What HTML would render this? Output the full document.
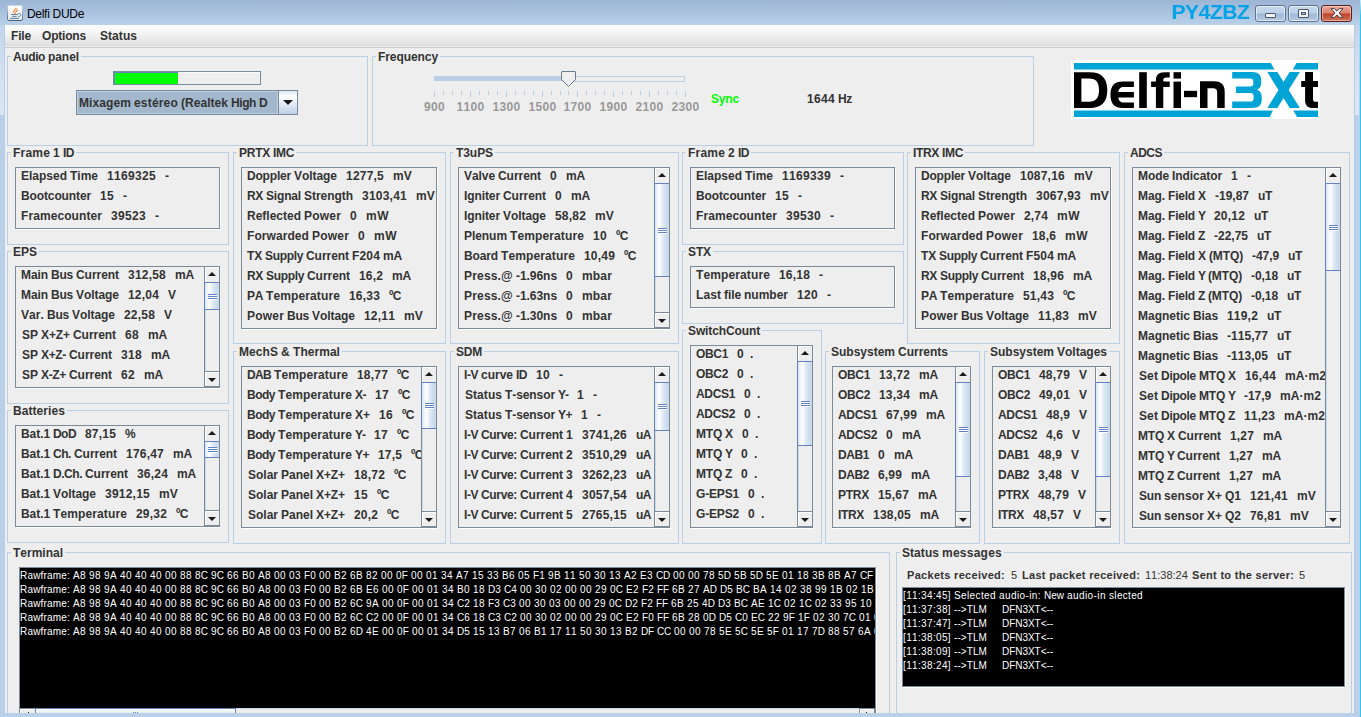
<!DOCTYPE html><html><head><meta charset="utf-8"><title>Delfi DUDe</title><style>
html,body{margin:0;padding:0;}
body{width:1361px;height:717px;overflow:hidden;position:relative;background:#eeeeee;
 font-family:"Liberation Sans",sans-serif;font-size:12px;font-weight:bold;color:#333333;font-kerning:none;font-variant-ligatures:none;}
div,span{box-sizing:border-box;}
.a{position:absolute;}
.tb{position:absolute;border:1px solid #b8cfe5;}
.tt{position:absolute;background:#eeeeee;white-space:pre;line-height:14px;height:14px;}
.box{position:absolute;border:1px solid #7a8a99;overflow:hidden;}
.boxhl{position:absolute;background:#ffffff;}
.r{position:absolute;white-space:pre;line-height:20px;height:20px;left:0;}
.sb{position:absolute;background:#eeeeee;border-left:1px solid #7a8a99;}
.sbtn{position:absolute;left:0;width:14px;background:#eeeeee;box-shadow:inset 1px 1px 0 #ffffff;}
.thumb{position:absolute;left:-1px;width:15px;border:1px solid #6382bf;border-right:0;
 background:linear-gradient(90deg,#d9e6f4 0%,#ffffff 30%,#dbe7f4 60%,#c2d6eb 100%);}
.grip{position:absolute;left:3px;width:9px;height:6px;
 background:repeating-linear-gradient(#6382bf 0px,#6382bf 1px,#ffffff 1px,#ffffff 2px);}
i{position:absolute;top:0;font-style:normal;white-space:pre;}
.tri{position:absolute;width:0;height:0;border-left:4px solid transparent;border-right:4px solid transparent;}
.term{position:absolute;background:#000;color:#fff;font-weight:normal;font-size:10px;overflow:hidden;}
.tr{position:absolute;white-space:pre;line-height:12px;height:12px;}
</style></head><body>
<div class="a" style="left:0;top:0;width:1361px;height:25px;background:linear-gradient(#9cb5d4 0%,#aac2de 50%,#b9d0ea 100%);"></div>
<div class="a" style="left:0;top:25px;width:5px;height:692px;background:#bad0e9;"></div>
<div class="a" style="left:1354px;top:25px;width:7px;height:692px;background:#bad0e9;"></div>
<div class="a" style="left:0;top:713px;width:1361px;height:4px;background:#bad0e9;"></div>
<div class="a" style="left:5px;top:25px;width:1349px;height:21px;background:linear-gradient(#ffffff 0%,#fbfbfb 15%,#efefef 55%,#dddddd 100%);"></div>
<div class="a" style="left:5px;top:46px;width:1349px;height:1px;background:#ececec;"></div>
<div class="a" style="left:5px;top:47px;width:1349px;height:1px;background:#cccccc;"></div>
<svg class="a" style="left:6px;top:4px" width="18" height="18" viewBox="6 4 18 18">
<defs><linearGradient id="jg" x1="0" y1="0" x2="0" y2="1"><stop offset="0" stop-color="#ffffff"/><stop offset="1" stop-color="#e6e6e6"/></linearGradient>
<linearGradient id="jb" x1="0" y1="0" x2="0" y2="1"><stop offset="0" stop-color="#c9d6e4"/><stop offset="0.5" stop-color="#8da3bb"/><stop offset="1" stop-color="#45627f"/></linearGradient></defs>
<rect x="7.5" y="5.5" width="15" height="15" rx="1.6" fill="url(#jg)" stroke="url(#jb)" stroke-width="1"/>
<path d="M13.2 12.4 L16.4 7.8 M14.5 13.6 L17.7 9.6" stroke="#e8761a" stroke-width="1.3" stroke-dasharray="1.6 0.5" fill="none"/>
<path d="M11.1 14.5 H18 M12.1 16.4 H16.7 M10 18.4 H18.8" stroke="#4d7498" stroke-width="0.9" fill="none"/>
<path d="M18.3 13.5 C21.4 13.2 21.4 16.4 18.2 16.8" stroke="#4d7498" stroke-width="0.9" fill="none"/>
</svg>
<div class="a" style="left:27px;top:5px;line-height:18px;font-weight:normal;color:#000;letter-spacing:-0.3px;white-space:pre;">Delfi DUDe</div>
<div class="a" id="py" style="left:1171.3px;top:0px;line-height:24px;font-size:21px;letter-spacing:-0.44px;color:#00a2e8;white-space:pre;">PY4ZBZ</div>
<div class="a" style="left:1255px;top:5px;width:31px;height:17px;border:1px solid #5f708c;border-radius:3px;background:linear-gradient(#c6d8ec 0%,#bdd1e8 48%,#9fb9d6 52%,#b4cae3 100%);box-shadow:inset 0 0 0 1px rgba(255,255,255,0.6);"></div>
<div class="a" style="left:1288px;top:5px;width:31px;height:17px;border:1px solid #5f708c;border-radius:3px;background:linear-gradient(#c6d8ec 0%,#bdd1e8 48%,#9fb9d6 52%,#b4cae3 100%);box-shadow:inset 0 0 0 1px rgba(255,255,255,0.6);"></div>
<div class="a" style="left:1321px;top:5px;width:31px;height:17px;border:1px solid #5b1c25;border-radius:3px;background:linear-gradient(#e9a99b 0%,#d9806c 48%,#bd4428 52%,#cf745c 100%);box-shadow:inset 0 0 0 1px rgba(255,220,210,0.55);"></div>
<div class="a" style="left:1265px;top:13px;width:11px;height:5px;border:1px solid #4b5468;border-radius:1px;background:#f4f4f4;"></div>
<div class="a" style="left:1298px;top:9px;width:11px;height:9px;border:1px solid #4b5468;border-radius:1px;background:#f4f4f4;"></div>
<div class="a" style="left:1301px;top:12px;width:5px;height:3px;border:1px solid #4b5468;background:#a9c0dc;"></div>
<svg class="a" style="left:1329.5px;top:8.3px" width="14" height="10" viewBox="0 0 14 10">
<path d="M1 0.6 L4.5 0.6 L7 3.1 L9.5 0.6 L13 0.6 L9.1 5 L13 9.4 L9.5 9.4 L7 6.9 L4.5 9.4 L1 9.4 L4.9 5 Z" fill="#f2f2f2" stroke="#43303a" stroke-width="0.9" stroke-linejoin="round"/>
</svg>
<div class="a" style="left:11px;top:26px;line-height:20px;height:20px;"><i style="left:0px;letter-spacing:-0.168px">File</i></div>
<div class="a" style="left:42px;top:26px;line-height:20px;height:20px;"><i style="left:0px;letter-spacing:-0.190px">Options</i></div>
<div class="a" style="left:100px;top:26px;line-height:20px;height:20px;"><i style="left:0px;letter-spacing:0.054px">Status</i></div>
<div class="tb" style="left:7px;top:56px;width:361px;height:90px;"></div>
<div class="tt" style="left:11px;top:50px;width:70px;"><div class="a" style="left:2px;top:0"><i style="left:0px;letter-spacing:-0.398px">Audio</i><i style="left:35px;letter-spacing:-0.068px">panel</i></div></div>
<div class="tb" style="left:372px;top:56px;width:662px;height:90px;"></div>
<div class="tt" style="left:376px;top:50px;width:64px;"><div class="a" style="left:2px;top:0"><i style="left:0px;letter-spacing:-0.076px">Frequency</i></div></div>
<div class="a" style="left:113px;top:71px;width:148px;height:14px;border:1px solid #7a8a99;background:#eeeeee;"></div>
<div class="a" style="left:114px;top:72px;width:64px;height:12px;background:#6382bf;"></div>
<div class="a" style="left:115px;top:73px;width:63px;height:11px;background:#00ff00;"></div>
<div class="a" style="left:178px;top:72px;width:82px;height:1px;background:#f8fbfe;"></div>
<div class="a" style="left:178px;top:72px;width:1px;height:12px;background:#ffffff;"></div>
<div class="a" style="left:76px;top:90px;width:222px;height:25px;border:1px solid #7a8a99;background:#a3b8cc;"></div>
<div class="a" style="left:77px;top:91px;width:201px;height:23px;border:1px solid #b8cfe5;"></div>
<div class="a" style="left:79px;top:93px;width:198px;height:20px;line-height:21px;overflow:hidden;" id="combo"><i style="left:0px;letter-spacing:0.093px">Mixagem</i><i style="left:55px;letter-spacing:0.187px">estéreo</i><i style="left:102px;letter-spacing:0.039px">(Realtek</i><i style="left:152px;letter-spacing:-0.415px">High</i><i style="left:180px;letter-spacing:-0.666px">D</i></div>
<div class="a" style="left:278px;top:91px;width:19px;height:23px;border-left:1px solid #7a8a99;background:linear-gradient(#dde8f4 0%,#ffffff 24%,#e4edf7 55%,#bdd1e7 100%);"></div>
<div class="tri" style="left:283px;top:100px;border-left-width:5px;border-right-width:5px;border-top:5px solid #1a1a1a;"></div>
<div class="a" style="left:434px;top:76px;width:251px;height:6px;border:1px solid #b8cfe5;border-left:0;background:#eeeeee;"></div>
<div class="a" style="left:434px;top:76px;width:134px;height:6px;background:#eeeeee;"></div>
<div class="a" style="left:434px;top:76px;width:134px;height:5px;background:#b8cfe5;"></div>
<div class="a" style="left:434px;top:91px;width:1px;height:6px;background:#b8cfe5;"></div>
<div class="a" style="left:443px;top:91px;width:1px;height:4px;background:#b8cfe5;"></div>
<div class="a" style="left:452px;top:91px;width:1px;height:4px;background:#b8cfe5;"></div>
<div class="a" style="left:461px;top:91px;width:1px;height:4px;background:#b8cfe5;"></div>
<div class="a" style="left:470px;top:91px;width:1px;height:6px;background:#b8cfe5;"></div>
<div class="a" style="left:479px;top:91px;width:1px;height:4px;background:#b8cfe5;"></div>
<div class="a" style="left:488px;top:91px;width:1px;height:4px;background:#b8cfe5;"></div>
<div class="a" style="left:497px;top:91px;width:1px;height:4px;background:#b8cfe5;"></div>
<div class="a" style="left:506px;top:91px;width:1px;height:6px;background:#b8cfe5;"></div>
<div class="a" style="left:515px;top:91px;width:1px;height:4px;background:#b8cfe5;"></div>
<div class="a" style="left:524px;top:91px;width:1px;height:4px;background:#b8cfe5;"></div>
<div class="a" style="left:533px;top:91px;width:1px;height:4px;background:#b8cfe5;"></div>
<div class="a" style="left:542px;top:91px;width:1px;height:6px;background:#b8cfe5;"></div>
<div class="a" style="left:551px;top:91px;width:1px;height:4px;background:#b8cfe5;"></div>
<div class="a" style="left:560px;top:91px;width:1px;height:4px;background:#b8cfe5;"></div>
<div class="a" style="left:568px;top:91px;width:1px;height:4px;background:#b8cfe5;"></div>
<div class="a" style="left:577px;top:91px;width:1px;height:6px;background:#b8cfe5;"></div>
<div class="a" style="left:586px;top:91px;width:1px;height:4px;background:#b8cfe5;"></div>
<div class="a" style="left:595px;top:91px;width:1px;height:4px;background:#b8cfe5;"></div>
<div class="a" style="left:604px;top:91px;width:1px;height:4px;background:#b8cfe5;"></div>
<div class="a" style="left:613px;top:91px;width:1px;height:6px;background:#b8cfe5;"></div>
<div class="a" style="left:622px;top:91px;width:1px;height:4px;background:#b8cfe5;"></div>
<div class="a" style="left:631px;top:91px;width:1px;height:4px;background:#b8cfe5;"></div>
<div class="a" style="left:640px;top:91px;width:1px;height:4px;background:#b8cfe5;"></div>
<div class="a" style="left:649px;top:91px;width:1px;height:6px;background:#b8cfe5;"></div>
<div class="a" style="left:658px;top:91px;width:1px;height:4px;background:#b8cfe5;"></div>
<div class="a" style="left:667px;top:91px;width:1px;height:4px;background:#b8cfe5;"></div>
<div class="a" style="left:676px;top:91px;width:1px;height:4px;background:#b8cfe5;"></div>
<div class="a" style="left:685px;top:91px;width:1px;height:6px;background:#b8cfe5;"></div>
<div class="a" style="left:424.0px;top:97px;line-height:20px;height:20px;color:#999999;"><i style="left:0px;letter-spacing:0.326px">900</i></div>
<div class="a" style="left:456.5px;top:97px;line-height:20px;height:20px;color:#999999;"><i style="left:0px;letter-spacing:0.326px">1100</i></div>
<div class="a" style="left:492.5px;top:97px;line-height:20px;height:20px;color:#999999;"><i style="left:0px;letter-spacing:0.326px">1300</i></div>
<div class="a" style="left:528.5px;top:97px;line-height:20px;height:20px;color:#999999;"><i style="left:0px;letter-spacing:0.326px">1500</i></div>
<div class="a" style="left:563.5px;top:97px;line-height:20px;height:20px;color:#999999;"><i style="left:0px;letter-spacing:0.326px">1700</i></div>
<div class="a" style="left:599.5px;top:97px;line-height:20px;height:20px;color:#999999;"><i style="left:0px;letter-spacing:0.326px">1900</i></div>
<div class="a" style="left:635.5px;top:97px;line-height:20px;height:20px;color:#999999;"><i style="left:0px;letter-spacing:0.326px">2100</i></div>
<div class="a" style="left:671.5px;top:97px;line-height:20px;height:20px;color:#999999;"><i style="left:0px;letter-spacing:0.326px">2300</i></div>
<svg class="a" style="left:560px;top:70px" width="17" height="18" viewBox="560 70 17 18">
<path d="M561.5 72 V79.5 L568.5 86.5 L575.5 79.5 V72 Q575.5 71.5 575 71.5 H562 Q561.5 71.5 561.5 72 Z" fill="#eeeeee" stroke="#6b7b8d" stroke-width="1"/>
</svg>
<div class="a" style="left:711px;top:89px;line-height:20px;height:20px;color:#00ff00;"><i style="left:0px;letter-spacing:-0.170px">Sync</i></div>
<div class="a" style="left:807px;top:89px;line-height:20px;height:20px;"><i style="left:0px;letter-spacing:0.326px">1644</i><i style="left:31px;letter-spacing:-0.333px">Hz</i></div>
<svg class="a" id="logo" style="left:1070px;top:58px" width="252" height="62" viewBox="1070 58 252 62">
<rect x="1071" y="60" width="249" height="59" fill="#ffffff"/>
<g fill="#00a3d6">
<path d="M1074 63 H1270.8 L1274.5 69.6 H1074 Z"/>
<path d="M1296.5 63 H1318 V69.6 H1292.8 Z"/>
<path d="M1074 110.6 H1272.9 L1269.7 116.9 H1074 Z"/>
<path d="M1293.3 110.6 H1318 V116.9 H1297.1 Z"/>
<path d="M1267.3 72.1 H1277.4 L1299.9 108 H1289.8 Z"/>
<path d="M1289.6 72.1 H1299.9 L1277.4 108 H1267.3 Z"/>
<path d="M1232.2 72.1 H1252 C1258.5 72.1 1261.2 75 1261.2 80.5 V82.5 C1261.2 86.5 1259.8 88.8 1256.8 89.8 C1260.2 90.8 1261.7 93 1261.7 97 V99.5 C1261.7 105 1259 108 1252 108 H1232.2 V101.6 H1250 C1252.6 101.6 1253.6 100.6 1253.6 98.5 V96 C1253.6 94 1252.6 93 1250 93 H1235.9 V86.6 H1250 C1252.4 86.6 1253.3 85.6 1253.3 83.8 V81.5 C1253.3 79.5 1252.4 78.5 1250 78.5 H1232.2 Z"/>
</g>
<g fill="#000000">
<path fill-rule="evenodd" d="M1074 72.2 H1090 C1101.5 72.2 1107.3 78 1107.3 90.1 C1107.3 102.2 1101.5 108 1090 108 H1074 Z M1081.4 78.6 V101.7 H1089 C1096 101.7 1099 98 1099 90.1 C1099 82.3 1096 78.6 1089 78.6 Z"/>
<path d="M1133.9 81.6 H1123 C1114 81.6 1110.5 86 1110.5 94.8 C1110.5 103.6 1114 108 1123 108 H1133.9 V102.6 H1124.2 C1120.2 102.6 1118.7 100.6 1118.3 97.5 H1133.9 V92.1 H1118.3 C1118.7 89 1120.2 87 1124.2 87 H1133.9 Z"/>
<rect x="1139.2" y="72.2" width="7.6" height="35.8"/>
<path d="M1169.7 72.2 H1164.5 C1158.5 72.2 1155.9 75 1155.9 80.5 V81.6 H1151.1 V87 H1155.9 V108 H1163.3 V87 H1169.7 V81.6 H1163.3 V80.5 C1163.3 78.3 1164.1 77.5 1166.5 77.5 H1169.7 Z"/>
<rect x="1173.5" y="72.2" width="7.5" height="6.4"/>
<rect x="1173.5" y="81.6" width="7.5" height="26.4"/>
<rect x="1184" y="90.8" width="13.1" height="6.4"/>
<path d="M1200 81.3 H1214 C1221 81.3 1224.7 84.5 1224.7 91.5 V108 H1217.2 V92.5 C1217.2 89.5 1216 88.2 1213 88.2 H1207.5 V108 H1200 Z"/>
<path d="M1305.1 72.1 H1313 V80.9 H1318 V87.1 H1313 V99 C1313 101 1314 101.8 1316 101.8 H1318 V108 H1313.5 C1307.5 108 1305.1 105.5 1305.1 100 V87.1 H1301.2 V80.9 H1305.1 Z"/>
</g>
</svg>
<div class="tb" style="left:7px;top:152px;width:222px;height:93px;"></div>
<div class="tt" style="left:11px;top:146px;width:65px;"><div class="a" style="left:2px;top:0"><i style="left:0px;letter-spacing:0.196px">Frame</i><i style="left:40px;letter-spacing:0.326px">1</i><i style="left:50px;letter-spacing:-0.500px">ID</i></div></div>
<div class="boxhl" style="left:220px;top:168px;width:1px;height:62px;"></div>
<div class="boxhl" style="left:16px;top:229px;width:205px;height:1px;"></div>
<div class="box" style="left:15px;top:167px;width:205px;height:62px;">
<div class="a" style="left:0;top:0;width:203px;height:60px;overflow:hidden;">
<div class="r" style="left:5px;top:-2px;"><i style="left:0px;letter-spacing:-0.003px">Elapsed</i><i style="left:49px;letter-spacing:-0.002px">Time</i><i style="left:86px;letter-spacing:0.326px">1169325</i><i style="left:144px;letter-spacing:-0.996px">-</i></div>
<div class="r" style="left:5px;top:18px;"><i style="left:0px;letter-spacing:-0.121px">Bootcounter</i><i style="left:79px;letter-spacing:0.326px">15</i><i style="left:102px;letter-spacing:-0.996px">-</i></div>
<div class="r" style="left:5px;top:38px;"><i style="left:0px;letter-spacing:0.082px">Framecounter</i><i style="left:90px;letter-spacing:0.326px">39523</i><i style="left:134px;letter-spacing:-0.996px">-</i></div>
</div>
</div>
<div class="tb" style="left:7px;top:251px;width:222px;height:153px;"></div>
<div class="tt" style="left:11px;top:245px;width:28px;"><div class="a" style="left:2px;top:0"><i style="left:0px;letter-spacing:-0.004px">EPS</i></div></div>
<div class="boxhl" style="left:16px;top:388px;width:205px;height:1px;"></div>
<div class="box" style="left:15px;top:266px;width:205px;height:122px;">
<div class="a" style="left:0;top:0;width:188px;height:120px;overflow:hidden;">
<div class="r" style="left:5px;top:-2px;"><i style="left:0px;letter-spacing:-0.083px">Main</i><i style="left:30px;letter-spacing:-0.223px">Bus</i><i style="left:55px;letter-spacing:-0.048px">Current</i><i style="left:107px;letter-spacing:0.216px">312,58</i><i style="left:154px;letter-spacing:-0.168px">mA</i></div>
<div class="r" style="left:5px;top:18px;"><i style="left:0px;letter-spacing:-0.083px">Main</i><i style="left:30px;letter-spacing:-0.223px">Bus</i><i style="left:55px;letter-spacing:-0.049px">Voltage</i><i style="left:107px;letter-spacing:0.194px">12,04</i><i style="left:147px;letter-spacing:-0.004px">V</i></div>
<div class="r" style="left:5px;top:38px;"><i style="left:0px;letter-spacing:0.080px">Var.</i><i style="left:26px;letter-spacing:-0.223px">Bus</i><i style="left:51px;letter-spacing:-0.049px">Voltage</i><i style="left:103px;letter-spacing:0.194px">22,58</i><i style="left:143px;letter-spacing:-0.004px">V</i></div>
<div class="r" style="left:6px;top:58px;"><i style="left:0px;letter-spacing:-0.004px">SP</i><i style="left:19px;letter-spacing:-0.087px">X+Z+</i><i style="left:51px;letter-spacing:-0.048px">Current</i><i style="left:103px;letter-spacing:0.326px">68</i><i style="left:126px;letter-spacing:-0.168px">mA</i></div>
<div class="r" style="left:6px;top:78px;"><i style="left:0px;letter-spacing:-0.004px">SP</i><i style="left:19px;letter-spacing:-0.334px">X+Z-</i><i style="left:47px;letter-spacing:-0.048px">Current</i><i style="left:99px;letter-spacing:0.326px">318</i><i style="left:129px;letter-spacing:-0.168px">mA</i></div>
<div class="r" style="left:6px;top:98px;"><i style="left:0px;letter-spacing:-0.004px">SP</i><i style="left:19px;letter-spacing:-0.334px">X-Z+</i><i style="left:47px;letter-spacing:-0.048px">Current</i><i style="left:99px;letter-spacing:0.326px">62</i><i style="left:122px;letter-spacing:-0.168px">mA</i></div>
</div>
</div>
<div class="sb" style="left:204px;top:267px;width:15px;height:120px;">
<div class="a" style="left:0;top:0;width:1px;height:120px;background:#c9dbee;"></div>
<div class="sbtn" style="top:0;height:15px;"></div>
<div class="tri" style="left:3px;top:5px;border-bottom:4px solid #1a1a1a;"></div>
<div class="sbtn" style="top:104px;height:16px;border-top:1px solid #7a8a99;border-bottom:1px solid #7a8a99;"></div>
<div class="tri" style="left:3px;top:111px;border-top:4px solid #1a1a1a;"></div>
<div class="thumb" style="top:15px;height:28px;"><div class="grip" style="top:11px;"></div></div>
</div>
<div class="tb" style="left:7px;top:410px;width:222px;height:133px;"></div>
<div class="tt" style="left:11px;top:404px;width:56px;"><div class="a" style="left:2px;top:0"><i style="left:0px;letter-spacing:0.071px">Batteries</i></div></div>
<div class="boxhl" style="left:16px;top:527px;width:205px;height:1px;"></div>
<div class="box" style="left:15px;top:425px;width:205px;height:102px;">
<div class="a" style="left:0;top:0;width:188px;height:100px;overflow:hidden;">
<div class="r" style="left:5px;top:-2px;"><i style="left:0px;letter-spacing:-0.069px">Bat.1</i><i style="left:32px;letter-spacing:-0.554px">DoD</i><i style="left:64px;letter-spacing:0.194px">87,15</i><i style="left:104px;letter-spacing:-0.670px">%</i></div>
<div class="r" style="left:5px;top:18px;"><i style="left:0px;letter-spacing:-0.069px">Bat.1</i><i style="left:32px;letter-spacing:-0.443px">Ch.</i><i style="left:53px;letter-spacing:-0.048px">Current</i><i style="left:105px;letter-spacing:0.216px">176,47</i><i style="left:152px;letter-spacing:-0.168px">mA</i></div>
<div class="r" style="left:5px;top:38px;"><i style="left:0px;letter-spacing:-0.069px">Bat.1</i><i style="left:32px;letter-spacing:-0.466px">D.Ch.</i><i style="left:64px;letter-spacing:-0.048px">Current</i><i style="left:116px;letter-spacing:0.194px">36,24</i><i style="left:156px;letter-spacing:-0.168px">mA</i></div>
<div class="r" style="left:5px;top:58px;"><i style="left:0px;letter-spacing:-0.069px">Bat.1</i><i style="left:32px;letter-spacing:-0.049px">Voltage</i><i style="left:84px;letter-spacing:0.232px">3912,15</i><i style="left:138px;letter-spacing:0.163px">mV</i></div>
<div class="r" style="left:5px;top:78px;"><i style="left:0px;letter-spacing:-0.069px">Bat.1</i><i style="left:32px;letter-spacing:0.119px">Temperature</i><i style="left:115px;letter-spacing:0.194px">29,32</i><i style="left:155px;letter-spacing:-0.524px">ºC</i></div>
</div>
</div>
<div class="sb" style="left:204px;top:426px;width:15px;height:100px;">
<div class="a" style="left:0;top:0;width:1px;height:100px;background:#c9dbee;"></div>
<div class="sbtn" style="top:0;height:15px;"></div>
<div class="tri" style="left:3px;top:5px;border-bottom:4px solid #1a1a1a;"></div>
<div class="sbtn" style="top:84px;height:16px;border-top:1px solid #7a8a99;border-bottom:1px solid #7a8a99;"></div>
<div class="tri" style="left:3px;top:91px;border-top:4px solid #1a1a1a;"></div>
<div class="thumb" style="top:15px;height:17px;"><div class="grip" style="top:5px;"></div></div>
</div>
<div class="tb" style="left:233px;top:152px;width:213px;height:192px;"></div>
<div class="tt" style="left:237px;top:146px;width:59px;"><div class="a" style="left:2px;top:0"><i style="left:0px;letter-spacing:-0.251px">PRTX</i><i style="left:34px;letter-spacing:-0.332px">IMC</i></div></div>
<div class="boxhl" style="left:437px;top:168px;width:1px;height:162px;"></div>
<div class="boxhl" style="left:242px;top:329px;width:196px;height:1px;"></div>
<div class="box" style="left:241px;top:167px;width:196px;height:162px;">
<div class="a" style="left:0;top:0;width:194px;height:160px;overflow:hidden;">
<div class="r" style="left:5px;top:-2px;"><i style="left:0px;letter-spacing:-0.191px">Doppler</i><i style="left:47px;letter-spacing:-0.049px">Voltage</i><i style="left:99px;letter-spacing:0.216px">1277,5</i><i style="left:146px;letter-spacing:0.163px">mV</i></div>
<div class="r" style="left:5px;top:18px;"><i style="left:0px;letter-spacing:-0.335px">RX</i><i style="left:19px;letter-spacing:-0.168px">Signal</i><i style="left:57px;letter-spacing:-0.041px">Strength</i><i style="left:115px;letter-spacing:0.232px">3103,41</i><i style="left:169px;letter-spacing:0.163px">mV</i></div>
<div class="r" style="left:5px;top:38px;"><i style="left:0px;letter-spacing:-0.002px">Reflected</i><i style="left:57px;letter-spacing:0.198px">Power</i><i style="left:103px;letter-spacing:0.326px">0</i><i style="left:119px;letter-spacing:0.502px">mW</i></div>
<div class="r" style="left:5px;top:58px;"><i style="left:0px;letter-spacing:0.073px">Forwarded</i><i style="left:65px;letter-spacing:0.198px">Power</i><i style="left:111px;letter-spacing:0.326px">0</i><i style="left:127px;letter-spacing:0.502px">mW</i></div>
<div class="r" style="left:5px;top:78px;"><i style="left:0px;letter-spacing:-0.167px">TX</i><i style="left:18px;letter-spacing:-0.334px">Supply</i><i style="left:59px;letter-spacing:-0.048px">Current</i><i style="left:105px;letter-spacing:0.162px">F204</i><i style="left:136px;letter-spacing:-0.168px">mA</i></div>
<div class="r" style="left:5px;top:98px;"><i style="left:0px;letter-spacing:-0.335px">RX</i><i style="left:19px;letter-spacing:-0.334px">Supply</i><i style="left:60px;letter-spacing:-0.048px">Current</i><i style="left:112px;letter-spacing:0.161px">16,2</i><i style="left:145px;letter-spacing:-0.168px">mA</i></div>
<div class="r" style="left:5px;top:118px;"><i style="left:0px;letter-spacing:-0.335px">PA</i><i style="left:19px;letter-spacing:0.119px">Temperature</i><i style="left:102px;letter-spacing:0.194px">16,33</i><i style="left:142px;letter-spacing:-0.524px">ºC</i></div>
<div class="r" style="left:5px;top:138px;"><i style="left:0px;letter-spacing:0.198px">Power</i><i style="left:40px;letter-spacing:-0.223px">Bus</i><i style="left:65px;letter-spacing:-0.049px">Voltage</i><i style="left:117px;letter-spacing:0.194px">12,11</i><i style="left:157px;letter-spacing:0.163px">mV</i></div>
</div>
</div>
<div class="tb" style="left:233px;top:351px;width:213px;height:193px;"></div>
<div class="tt" style="left:237px;top:345px;width:105px;"><div class="a" style="left:2px;top:0"><i style="left:0px;letter-spacing:0.064px">MechS</i><i style="left:42px;letter-spacing:0.334px">&amp;</i><i style="left:54px;letter-spacing:0.045px">Thermal</i></div></div>
<div class="boxhl" style="left:242px;top:528px;width:196px;height:1px;"></div>
<div class="box" style="left:241px;top:366px;width:196px;height:162px;">
<div class="a" style="left:0;top:0;width:179px;height:160px;overflow:hidden;">
<div class="r" style="left:5px;top:-2px;"><i style="left:0px;letter-spacing:-0.666px">DAB</i><i style="left:27px;letter-spacing:0.119px">Temperature</i><i style="left:110px;letter-spacing:0.194px">18,77</i><i style="left:150px;letter-spacing:-0.524px">ºC</i></div>
<div class="r" style="left:5px;top:18px;"><i style="left:0px;letter-spacing:-0.500px">Body</i><i style="left:31px;letter-spacing:0.119px">Temperature</i><i style="left:108px;letter-spacing:-0.500px">X-</i><i style="left:128px;letter-spacing:0.326px">17</i><i style="left:151px;letter-spacing:-0.524px">ºC</i></div>
<div class="r" style="left:5px;top:38px;"><i style="left:0px;letter-spacing:-0.500px">Body</i><i style="left:31px;letter-spacing:0.119px">Temperature</i><i style="left:108px;letter-spacing:-0.006px">X+</i><i style="left:132px;letter-spacing:0.326px">16</i><i style="left:155px;letter-spacing:-0.524px">ºC</i></div>
<div class="r" style="left:5px;top:58px;"><i style="left:0px;letter-spacing:-0.500px">Body</i><i style="left:31px;letter-spacing:0.119px">Temperature</i><i style="left:108px;letter-spacing:-1.000px">Y-</i><i style="left:127px;letter-spacing:0.326px">17</i><i style="left:150px;letter-spacing:-0.524px">ºC</i></div>
<div class="r" style="left:5px;top:78px;"><i style="left:0px;letter-spacing:-0.500px">Body</i><i style="left:31px;letter-spacing:0.119px">Temperature</i><i style="left:108px;letter-spacing:-0.506px">Y+</i><i style="left:131px;letter-spacing:0.161px">17,5</i><i style="left:164px;letter-spacing:-0.524px">ºC</i></div>
<div class="r" style="left:6px;top:98px;"><i style="left:0px;letter-spacing:-0.002px">Solar</i><i style="left:33px;letter-spacing:-0.003px">Panel</i><i style="left:68px;letter-spacing:-0.087px">X+Z+</i><i style="left:106px;letter-spacing:0.194px">18,72</i><i style="left:146px;letter-spacing:-0.524px">ºC</i></div>
<div class="r" style="left:6px;top:118px;"><i style="left:0px;letter-spacing:-0.002px">Solar</i><i style="left:33px;letter-spacing:-0.003px">Panel</i><i style="left:68px;letter-spacing:-0.087px">X+Z+</i><i style="left:106px;letter-spacing:0.326px">15</i><i style="left:129px;letter-spacing:-0.524px">ºC</i></div>
<div class="r" style="left:6px;top:138px;"><i style="left:0px;letter-spacing:-0.002px">Solar</i><i style="left:33px;letter-spacing:-0.003px">Panel</i><i style="left:68px;letter-spacing:-0.087px">X+Z+</i><i style="left:106px;letter-spacing:0.161px">20,2</i><i style="left:139px;letter-spacing:-0.524px">ºC</i></div>
</div>
</div>
<div class="sb" style="left:421px;top:367px;width:15px;height:160px;">
<div class="a" style="left:0;top:0;width:1px;height:160px;background:#c9dbee;"></div>
<div class="sbtn" style="top:0;height:15px;"></div>
<div class="tri" style="left:3px;top:5px;border-bottom:4px solid #1a1a1a;"></div>
<div class="sbtn" style="top:144px;height:16px;border-top:1px solid #7a8a99;border-bottom:1px solid #7a8a99;"></div>
<div class="tri" style="left:3px;top:151px;border-top:4px solid #1a1a1a;"></div>
<div class="thumb" style="top:15px;height:47px;"><div class="grip" style="top:20px;"></div></div>
</div>
<div class="tb" style="left:450px;top:152px;width:229px;height:192px;"></div>
<div class="tt" style="left:454px;top:146px;width:41px;"><div class="a" style="left:2px;top:0"><i style="left:0px;letter-spacing:-0.068px">T3uPS</i></div></div>
<div class="boxhl" style="left:459px;top:329px;width:212px;height:1px;"></div>
<div class="box" style="left:458px;top:167px;width:212px;height:162px;">
<div class="a" style="left:0;top:0;width:195px;height:160px;overflow:hidden;">
<div class="r" style="left:5px;top:-2px;"><i style="left:0px;letter-spacing:-0.072px">Valve</i><i style="left:34px;letter-spacing:-0.048px">Current</i><i style="left:86px;letter-spacing:0.326px">0</i><i style="left:102px;letter-spacing:-0.168px">mA</i></div>
<div class="r" style="left:5px;top:18px;"><i style="left:0px;letter-spacing:-0.095px">Igniter</i><i style="left:39px;letter-spacing:-0.048px">Current</i><i style="left:91px;letter-spacing:0.326px">0</i><i style="left:107px;letter-spacing:-0.168px">mA</i></div>
<div class="r" style="left:5px;top:38px;"><i style="left:0px;letter-spacing:-0.095px">Igniter</i><i style="left:39px;letter-spacing:-0.049px">Voltage</i><i style="left:91px;letter-spacing:0.194px">58,82</i><i style="left:131px;letter-spacing:0.163px">mV</i></div>
<div class="r" style="left:5px;top:58px;"><i style="left:0px;letter-spacing:-0.057px">Plenum</i><i style="left:46px;letter-spacing:0.119px">Temperature</i><i style="left:129px;letter-spacing:0.326px">10</i><i style="left:152px;letter-spacing:-0.524px">ºC</i></div>
<div class="r" style="left:5px;top:78px;"><i style="left:0px;letter-spacing:-0.134px">Board</i><i style="left:37px;letter-spacing:0.119px">Temperature</i><i style="left:120px;letter-spacing:0.194px">10,49</i><i style="left:160px;letter-spacing:-0.524px">ºC</i></div>
<div class="r" style="left:5px;top:98px;"><i style="left:0px;letter-spacing:0.181px">Press.@</i><i style="left:52px;letter-spacing:-0.051px">-1.96ns</i><i style="left:102px;letter-spacing:0.326px">0</i><i style="left:118px;letter-spacing:0.164px">mbar</i></div>
<div class="r" style="left:5px;top:118px;"><i style="left:0px;letter-spacing:0.181px">Press.@</i><i style="left:52px;letter-spacing:-0.051px">-1.63ns</i><i style="left:102px;letter-spacing:0.326px">0</i><i style="left:118px;letter-spacing:0.164px">mbar</i></div>
<div class="r" style="left:5px;top:138px;"><i style="left:0px;letter-spacing:0.181px">Press.@</i><i style="left:52px;letter-spacing:-0.051px">-1.30ns</i><i style="left:102px;letter-spacing:0.326px">0</i><i style="left:118px;letter-spacing:0.164px">mbar</i></div>
</div>
</div>
<div class="sb" style="left:654px;top:168px;width:15px;height:160px;">
<div class="a" style="left:0;top:0;width:1px;height:160px;background:#c9dbee;"></div>
<div class="sbtn" style="top:0;height:15px;"></div>
<div class="tri" style="left:3px;top:5px;border-bottom:4px solid #1a1a1a;"></div>
<div class="sbtn" style="top:144px;height:16px;border-top:1px solid #7a8a99;border-bottom:1px solid #7a8a99;"></div>
<div class="tri" style="left:3px;top:151px;border-top:4px solid #1a1a1a;"></div>
<div class="thumb" style="top:15px;height:94px;"><div class="grip" style="top:44px;"></div></div>
</div>
<div class="tb" style="left:450px;top:351px;width:229px;height:193px;"></div>
<div class="tt" style="left:454px;top:345px;width:30px;"><div class="a" style="left:2px;top:0"><i style="left:0px;letter-spacing:-0.222px">SDM</i></div></div>
<div class="boxhl" style="left:459px;top:528px;width:212px;height:1px;"></div>
<div class="box" style="left:458px;top:366px;width:212px;height:162px;">
<div class="a" style="left:0;top:0;width:195px;height:160px;overflow:hidden;">
<div class="r" style="left:5px;top:-2px;"><i style="left:0px;letter-spacing:-0.445px">I-V</i><i style="left:17px;letter-spacing:-0.004px">curve</i><i style="left:52px;letter-spacing:-0.500px">ID</i><i style="left:72px;letter-spacing:0.326px">10</i><i style="left:95px;letter-spacing:-0.996px">-</i></div>
<div class="r" style="left:6px;top:18px;"><i style="left:0px;letter-spacing:0.054px">Status</i><i style="left:40px;letter-spacing:-0.085px">T-sensor</i><i style="left:93px;letter-spacing:-1.000px">Y-</i><i style="left:112px;letter-spacing:0.326px">1</i><i style="left:128px;letter-spacing:-0.996px">-</i></div>
<div class="r" style="left:6px;top:38px;"><i style="left:0px;letter-spacing:0.054px">Status</i><i style="left:40px;letter-spacing:-0.085px">T-sensor</i><i style="left:93px;letter-spacing:-0.506px">Y+</i><i style="left:116px;letter-spacing:0.326px">1</i><i style="left:132px;letter-spacing:-0.996px">-</i></div>
<div class="r" style="left:5px;top:58px;"><i style="left:0px;letter-spacing:-0.445px">I-V</i><i style="left:17px;letter-spacing:-0.335px">Curve:</i><i style="left:56px;letter-spacing:-0.048px">Current</i><i style="left:102px;letter-spacing:0.326px">1</i><i style="left:118px;letter-spacing:0.232px">3741,26</i><i style="left:172px;letter-spacing:-0.498px">uA</i></div>
<div class="r" style="left:5px;top:78px;"><i style="left:0px;letter-spacing:-0.445px">I-V</i><i style="left:17px;letter-spacing:-0.335px">Curve:</i><i style="left:56px;letter-spacing:-0.048px">Current</i><i style="left:102px;letter-spacing:0.326px">2</i><i style="left:118px;letter-spacing:0.232px">3510,29</i><i style="left:172px;letter-spacing:-0.498px">uA</i></div>
<div class="r" style="left:5px;top:98px;"><i style="left:0px;letter-spacing:-0.445px">I-V</i><i style="left:17px;letter-spacing:-0.335px">Curve:</i><i style="left:56px;letter-spacing:-0.048px">Current</i><i style="left:102px;letter-spacing:0.326px">3</i><i style="left:118px;letter-spacing:0.232px">3262,23</i><i style="left:172px;letter-spacing:-0.498px">uA</i></div>
<div class="r" style="left:5px;top:118px;"><i style="left:0px;letter-spacing:-0.445px">I-V</i><i style="left:17px;letter-spacing:-0.335px">Curve:</i><i style="left:56px;letter-spacing:-0.048px">Current</i><i style="left:102px;letter-spacing:0.326px">4</i><i style="left:118px;letter-spacing:0.232px">3057,54</i><i style="left:172px;letter-spacing:-0.498px">uA</i></div>
<div class="r" style="left:5px;top:138px;"><i style="left:0px;letter-spacing:-0.445px">I-V</i><i style="left:17px;letter-spacing:-0.335px">Curve:</i><i style="left:56px;letter-spacing:-0.048px">Current</i><i style="left:102px;letter-spacing:0.326px">5</i><i style="left:118px;letter-spacing:0.232px">2765,15</i><i style="left:172px;letter-spacing:-0.498px">uA</i></div>
</div>
</div>
<div class="sb" style="left:654px;top:367px;width:15px;height:160px;">
<div class="a" style="left:0;top:0;width:1px;height:160px;background:#c9dbee;"></div>
<div class="sbtn" style="top:0;height:15px;"></div>
<div class="tri" style="left:3px;top:5px;border-bottom:4px solid #1a1a1a;"></div>
<div class="sbtn" style="top:144px;height:16px;border-top:1px solid #7a8a99;border-bottom:1px solid #7a8a99;"></div>
<div class="tri" style="left:3px;top:151px;border-top:4px solid #1a1a1a;"></div>
<div class="thumb" style="top:15px;height:49px;"><div class="grip" style="top:21px;"></div></div>
</div>
<div class="tb" style="left:682px;top:152px;width:222px;height:93px;"></div>
<div class="tt" style="left:686px;top:146px;width:65px;"><div class="a" style="left:2px;top:0"><i style="left:0px;letter-spacing:0.196px">Frame</i><i style="left:40px;letter-spacing:0.326px">2</i><i style="left:50px;letter-spacing:-0.500px">ID</i></div></div>
<div class="boxhl" style="left:895px;top:168px;width:1px;height:62px;"></div>
<div class="boxhl" style="left:691px;top:229px;width:205px;height:1px;"></div>
<div class="box" style="left:690px;top:167px;width:205px;height:62px;">
<div class="a" style="left:0;top:0;width:203px;height:60px;overflow:hidden;">
<div class="r" style="left:5px;top:-2px;"><i style="left:0px;letter-spacing:-0.003px">Elapsed</i><i style="left:49px;letter-spacing:-0.002px">Time</i><i style="left:86px;letter-spacing:0.326px">1169339</i><i style="left:144px;letter-spacing:-0.996px">-</i></div>
<div class="r" style="left:5px;top:18px;"><i style="left:0px;letter-spacing:-0.121px">Bootcounter</i><i style="left:79px;letter-spacing:0.326px">15</i><i style="left:102px;letter-spacing:-0.996px">-</i></div>
<div class="r" style="left:5px;top:38px;"><i style="left:0px;letter-spacing:0.082px">Framecounter</i><i style="left:90px;letter-spacing:0.326px">39530</i><i style="left:134px;letter-spacing:-0.996px">-</i></div>
</div>
</div>
<div class="tb" style="left:682px;top:251px;width:222px;height:73px;"></div>
<div class="tt" style="left:686px;top:245px;width:27px;"><div class="a" style="left:2px;top:0"><i style="left:0px;letter-spacing:-0.113px">STX</i></div></div>
<div class="boxhl" style="left:895px;top:267px;width:1px;height:42px;"></div>
<div class="boxhl" style="left:691px;top:308px;width:205px;height:1px;"></div>
<div class="box" style="left:690px;top:266px;width:205px;height:42px;">
<div class="a" style="left:0;top:0;width:203px;height:40px;overflow:hidden;">
<div class="r" style="left:5px;top:-2px;"><i style="left:0px;letter-spacing:0.119px">Temperature</i><i style="left:83px;letter-spacing:0.194px">16,18</i><i style="left:123px;letter-spacing:-0.996px">-</i></div>
<div class="r" style="left:5px;top:18px;"><i style="left:0px;letter-spacing:0.082px">Last</i><i style="left:28px;letter-spacing:-0.084px">file</i><i style="left:48px;letter-spacing:-0.001px">number</i><i style="left:101px;letter-spacing:0.326px">120</i><i style="left:131px;letter-spacing:-0.996px">-</i></div>
</div>
</div>
<div class="tb" style="left:682px;top:330px;width:140px;height:214px;"></div>
<div class="tt" style="left:686px;top:324px;width:76px;"><div class="a" style="left:2px;top:0"><i style="left:0px;letter-spacing:-0.120px">SwitchCount</i></div></div>
<div class="boxhl" style="left:691px;top:528px;width:123px;height:1px;"></div>
<div class="box" style="left:690px;top:345px;width:123px;height:183px;">
<div class="a" style="left:0;top:0;width:106px;height:181px;overflow:hidden;">
<div class="r" style="left:5px;top:-2px;"><i style="left:0px;letter-spacing:-0.335px">OBC1</i><i style="left:41px;letter-spacing:0.326px">0</i><i style="left:54px;letter-spacing:-0.334px">.</i></div>
<div class="r" style="left:5px;top:18px;"><i style="left:0px;letter-spacing:-0.335px">OBC2</i><i style="left:41px;letter-spacing:0.326px">0</i><i style="left:54px;letter-spacing:-0.334px">.</i></div>
<div class="r" style="left:5px;top:38px;"><i style="left:0px;letter-spacing:-0.335px">ADCS1</i><i style="left:48px;letter-spacing:0.326px">0</i><i style="left:61px;letter-spacing:-0.334px">.</i></div>
<div class="r" style="left:5px;top:58px;"><i style="left:0px;letter-spacing:-0.335px">ADCS2</i><i style="left:48px;letter-spacing:0.326px">0</i><i style="left:61px;letter-spacing:-0.334px">.</i></div>
<div class="r" style="left:5px;top:78px;"><i style="left:0px;letter-spacing:-0.220px">MTQ</i><i style="left:29px;letter-spacing:-0.004px">X</i><i style="left:46px;letter-spacing:0.326px">0</i><i style="left:59px;letter-spacing:-0.334px">.</i></div>
<div class="r" style="left:5px;top:98px;"><i style="left:0px;letter-spacing:-0.220px">MTQ</i><i style="left:29px;letter-spacing:-1.004px">Y</i><i style="left:45px;letter-spacing:0.326px">0</i><i style="left:58px;letter-spacing:-0.334px">.</i></div>
<div class="r" style="left:5px;top:118px;"><i style="left:0px;letter-spacing:-0.220px">MTQ</i><i style="left:29px;letter-spacing:-0.330px">Z</i><i style="left:45px;letter-spacing:0.326px">0</i><i style="left:58px;letter-spacing:-0.334px">.</i></div>
<div class="r" style="left:5px;top:138px;"><i style="left:0px;letter-spacing:-0.169px">G-EPS1</i><i style="left:52px;letter-spacing:0.326px">0</i><i style="left:65px;letter-spacing:-0.334px">.</i></div>
<div class="r" style="left:5px;top:158px;"><i style="left:0px;letter-spacing:-0.169px">G-EPS2</i><i style="left:52px;letter-spacing:0.326px">0</i><i style="left:65px;letter-spacing:-0.334px">.</i></div>
</div>
</div>
<div class="sb" style="left:797px;top:346px;width:15px;height:181px;">
<div class="a" style="left:0;top:0;width:1px;height:181px;background:#c9dbee;"></div>
<div class="sbtn" style="top:0;height:15px;"></div>
<div class="tri" style="left:3px;top:5px;border-bottom:4px solid #1a1a1a;"></div>
<div class="sbtn" style="top:165px;height:16px;border-top:1px solid #7a8a99;border-bottom:1px solid #7a8a99;"></div>
<div class="tri" style="left:3px;top:172px;border-top:4px solid #1a1a1a;"></div>
<div class="thumb" style="top:15px;height:85px;"><div class="grip" style="top:39px;"></div></div>
</div>
<div class="tb" style="left:825px;top:351px;width:155px;height:193px;"></div>
<div class="tt" style="left:829px;top:345px;width:121px;"><div class="a" style="left:2px;top:0"><i style="left:0px;letter-spacing:-0.003px">Subsystem</i><i style="left:67px;letter-spacing:-0.001px">Currents</i></div></div>
<div class="boxhl" style="left:833px;top:528px;width:139px;height:1px;"></div>
<div class="box" style="left:832px;top:366px;width:139px;height:162px;">
<div class="a" style="left:0;top:0;width:122px;height:160px;overflow:hidden;">
<div class="r" style="left:5px;top:-2px;"><i style="left:0px;letter-spacing:-0.335px">OBC1</i><i style="left:41px;letter-spacing:0.194px">13,72</i><i style="left:81px;letter-spacing:-0.168px">mA</i></div>
<div class="r" style="left:5px;top:18px;"><i style="left:0px;letter-spacing:-0.335px">OBC2</i><i style="left:41px;letter-spacing:0.194px">13,34</i><i style="left:81px;letter-spacing:-0.168px">mA</i></div>
<div class="r" style="left:5px;top:38px;"><i style="left:0px;letter-spacing:-0.335px">ADCS1</i><i style="left:48px;letter-spacing:0.194px">67,99</i><i style="left:88px;letter-spacing:-0.168px">mA</i></div>
<div class="r" style="left:5px;top:58px;"><i style="left:0px;letter-spacing:-0.335px">ADCS2</i><i style="left:48px;letter-spacing:0.326px">0</i><i style="left:64px;letter-spacing:-0.168px">mA</i></div>
<div class="r" style="left:5px;top:78px;"><i style="left:0px;letter-spacing:-0.418px">DAB1</i><i style="left:40px;letter-spacing:0.326px">0</i><i style="left:56px;letter-spacing:-0.168px">mA</i></div>
<div class="r" style="left:5px;top:98px;"><i style="left:0px;letter-spacing:-0.418px">DAB2</i><i style="left:40px;letter-spacing:0.161px">6,99</i><i style="left:73px;letter-spacing:-0.168px">mA</i></div>
<div class="r" style="left:5px;top:118px;"><i style="left:0px;letter-spacing:-0.251px">PTRX</i><i style="left:40px;letter-spacing:0.194px">15,67</i><i style="left:80px;letter-spacing:-0.168px">mA</i></div>
<div class="r" style="left:5px;top:138px;"><i style="left:0px;letter-spacing:-0.333px">ITRX</i><i style="left:35px;letter-spacing:0.216px">138,05</i><i style="left:82px;letter-spacing:-0.168px">mA</i></div>
</div>
</div>
<div class="sb" style="left:955px;top:367px;width:15px;height:160px;">
<div class="a" style="left:0;top:0;width:1px;height:160px;background:#c9dbee;"></div>
<div class="sbtn" style="top:0;height:15px;"></div>
<div class="tri" style="left:3px;top:5px;border-bottom:4px solid #1a1a1a;"></div>
<div class="sbtn" style="top:144px;height:16px;border-top:1px solid #7a8a99;border-bottom:1px solid #7a8a99;"></div>
<div class="tri" style="left:3px;top:151px;border-top:4px solid #1a1a1a;"></div>
<div class="thumb" style="top:15px;height:95px;"><div class="grip" style="top:44px;"></div></div>
</div>
<div class="tb" style="left:984px;top:351px;width:136px;height:193px;"></div>
<div class="tt" style="left:988px;top:345px;width:121px;"><div class="a" style="left:2px;top:0"><i style="left:0px;letter-spacing:-0.003px">Subsystem</i><i style="left:67px;letter-spacing:-0.002px">Voltages</i></div></div>
<div class="boxhl" style="left:993px;top:528px;width:119px;height:1px;"></div>
<div class="box" style="left:992px;top:366px;width:119px;height:162px;">
<div class="a" style="left:0;top:0;width:102px;height:160px;overflow:hidden;">
<div class="r" style="left:5px;top:-2px;"><i style="left:0px;letter-spacing:-0.335px">OBC1</i><i style="left:41px;letter-spacing:0.194px">48,79</i><i style="left:81px;letter-spacing:-0.004px">V</i></div>
<div class="r" style="left:5px;top:18px;"><i style="left:0px;letter-spacing:-0.335px">OBC2</i><i style="left:41px;letter-spacing:0.194px">49,01</i><i style="left:81px;letter-spacing:-0.004px">V</i></div>
<div class="r" style="left:5px;top:38px;"><i style="left:0px;letter-spacing:-0.335px">ADCS1</i><i style="left:48px;letter-spacing:0.161px">48,9</i><i style="left:81px;letter-spacing:-0.004px">V</i></div>
<div class="r" style="left:5px;top:58px;"><i style="left:0px;letter-spacing:-0.335px">ADCS2</i><i style="left:48px;letter-spacing:0.106px">4,6</i><i style="left:74px;letter-spacing:-0.004px">V</i></div>
<div class="r" style="left:5px;top:78px;"><i style="left:0px;letter-spacing:-0.418px">DAB1</i><i style="left:40px;letter-spacing:0.161px">48,9</i><i style="left:73px;letter-spacing:-0.004px">V</i></div>
<div class="r" style="left:5px;top:98px;"><i style="left:0px;letter-spacing:-0.418px">DAB2</i><i style="left:40px;letter-spacing:0.161px">3,48</i><i style="left:73px;letter-spacing:-0.004px">V</i></div>
<div class="r" style="left:5px;top:118px;"><i style="left:0px;letter-spacing:-0.251px">PTRX</i><i style="left:40px;letter-spacing:0.194px">48,79</i><i style="left:80px;letter-spacing:-0.004px">V</i></div>
<div class="r" style="left:5px;top:138px;"><i style="left:0px;letter-spacing:-0.333px">ITRX</i><i style="left:35px;letter-spacing:0.194px">48,57</i><i style="left:75px;letter-spacing:-0.004px">V</i></div>
</div>
</div>
<div class="sb" style="left:1095px;top:367px;width:15px;height:160px;">
<div class="a" style="left:0;top:0;width:1px;height:160px;background:#c9dbee;"></div>
<div class="sbtn" style="top:0;height:15px;"></div>
<div class="tri" style="left:3px;top:5px;border-bottom:4px solid #1a1a1a;"></div>
<div class="sbtn" style="top:144px;height:16px;border-top:1px solid #7a8a99;border-bottom:1px solid #7a8a99;"></div>
<div class="tri" style="left:3px;top:151px;border-top:4px solid #1a1a1a;"></div>
<div class="thumb" style="top:15px;height:95px;"><div class="grip" style="top:44px;"></div></div>
</div>
<div class="tb" style="left:907px;top:152px;width:213px;height:192px;"></div>
<div class="tt" style="left:911px;top:146px;width:54px;"><div class="a" style="left:2px;top:0"><i style="left:0px;letter-spacing:-0.333px">ITRX</i><i style="left:29px;letter-spacing:-0.332px">IMC</i></div></div>
<div class="boxhl" style="left:1111px;top:168px;width:1px;height:162px;"></div>
<div class="boxhl" style="left:916px;top:329px;width:196px;height:1px;"></div>
<div class="box" style="left:915px;top:167px;width:196px;height:162px;">
<div class="a" style="left:0;top:0;width:194px;height:160px;overflow:hidden;">
<div class="r" style="left:5px;top:-2px;"><i style="left:0px;letter-spacing:-0.191px">Doppler</i><i style="left:47px;letter-spacing:-0.049px">Voltage</i><i style="left:99px;letter-spacing:0.232px">1087,16</i><i style="left:153px;letter-spacing:0.163px">mV</i></div>
<div class="r" style="left:5px;top:18px;"><i style="left:0px;letter-spacing:-0.335px">RX</i><i style="left:19px;letter-spacing:-0.168px">Signal</i><i style="left:57px;letter-spacing:-0.041px">Strength</i><i style="left:115px;letter-spacing:0.232px">3067,93</i><i style="left:169px;letter-spacing:0.163px">mV</i></div>
<div class="r" style="left:5px;top:38px;"><i style="left:0px;letter-spacing:-0.002px">Reflected</i><i style="left:57px;letter-spacing:0.198px">Power</i><i style="left:103px;letter-spacing:0.161px">2,74</i><i style="left:136px;letter-spacing:0.502px">mW</i></div>
<div class="r" style="left:5px;top:58px;"><i style="left:0px;letter-spacing:0.073px">Forwarded</i><i style="left:65px;letter-spacing:0.198px">Power</i><i style="left:111px;letter-spacing:0.161px">18,6</i><i style="left:144px;letter-spacing:0.502px">mW</i></div>
<div class="r" style="left:5px;top:78px;"><i style="left:0px;letter-spacing:-0.167px">TX</i><i style="left:18px;letter-spacing:-0.334px">Supply</i><i style="left:59px;letter-spacing:-0.048px">Current</i><i style="left:105px;letter-spacing:0.162px">F504</i><i style="left:136px;letter-spacing:-0.168px">mA</i></div>
<div class="r" style="left:5px;top:98px;"><i style="left:0px;letter-spacing:-0.335px">RX</i><i style="left:19px;letter-spacing:-0.334px">Supply</i><i style="left:60px;letter-spacing:-0.048px">Current</i><i style="left:112px;letter-spacing:0.194px">18,96</i><i style="left:152px;letter-spacing:-0.168px">mA</i></div>
<div class="r" style="left:5px;top:118px;"><i style="left:0px;letter-spacing:-0.335px">PA</i><i style="left:19px;letter-spacing:0.119px">Temperature</i><i style="left:102px;letter-spacing:0.194px">51,43</i><i style="left:142px;letter-spacing:-0.524px">ºC</i></div>
<div class="r" style="left:5px;top:138px;"><i style="left:0px;letter-spacing:0.198px">Power</i><i style="left:40px;letter-spacing:-0.223px">Bus</i><i style="left:65px;letter-spacing:-0.049px">Voltage</i><i style="left:117px;letter-spacing:0.194px">11,83</i><i style="left:157px;letter-spacing:0.163px">mV</i></div>
</div>
</div>
<div class="tb" style="left:1124px;top:152px;width:226px;height:392px;"></div>
<div class="tt" style="left:1128px;top:146px;width:36px;"><div class="a" style="left:2px;top:0"><i style="left:0px;letter-spacing:-0.500px">ADCS</i></div></div>
<div class="boxhl" style="left:1133px;top:528px;width:209px;height:1px;"></div>
<div class="box" style="left:1132px;top:167px;width:209px;height:361px;">
<div class="a" style="left:0;top:0;width:192px;height:359px;overflow:hidden;">
<div class="r" style="left:5px;top:-2px;"><i style="left:0px;letter-spacing:-0.083px">Mode</i><i style="left:34px;letter-spacing:-0.075px">Indicator</i><i style="left:93px;letter-spacing:0.326px">1</i><i style="left:109px;letter-spacing:-0.996px">-</i></div>
<div class="r" style="left:5px;top:18px;"><i style="left:0px;letter-spacing:-0.083px">Mag.</i><i style="left:30px;letter-spacing:-0.200px">Field</i><i style="left:60px;letter-spacing:-0.004px">X</i><i style="left:77px;letter-spacing:-0.004px">-19,87</i><i style="left:120px;letter-spacing:-0.330px">uT</i></div>
<div class="r" style="left:5px;top:38px;"><i style="left:0px;letter-spacing:-0.083px">Mag.</i><i style="left:30px;letter-spacing:-0.200px">Field</i><i style="left:60px;letter-spacing:-1.004px">Y</i><i style="left:76px;letter-spacing:0.194px">20,12</i><i style="left:116px;letter-spacing:-0.330px">uT</i></div>
<div class="r" style="left:5px;top:58px;"><i style="left:0px;letter-spacing:-0.083px">Mag.</i><i style="left:30px;letter-spacing:-0.200px">Field</i><i style="left:60px;letter-spacing:-0.330px">Z</i><i style="left:76px;letter-spacing:-0.004px">-22,75</i><i style="left:119px;letter-spacing:-0.330px">uT</i></div>
<div class="r" style="left:5px;top:78px;"><i style="left:0px;letter-spacing:-0.083px">Mag.</i><i style="left:30px;letter-spacing:-0.200px">Field</i><i style="left:60px;letter-spacing:-0.004px">X</i><i style="left:71px;letter-spacing:-0.130px">(MTQ)</i><i style="left:114px;letter-spacing:-0.070px">-47,9</i><i style="left:150px;letter-spacing:-0.330px">uT</i></div>
<div class="r" style="left:5px;top:98px;"><i style="left:0px;letter-spacing:-0.083px">Mag.</i><i style="left:30px;letter-spacing:-0.200px">Field</i><i style="left:60px;letter-spacing:-1.004px">Y</i><i style="left:70px;letter-spacing:-0.130px">(MTQ)</i><i style="left:113px;letter-spacing:-0.070px">-0,18</i><i style="left:149px;letter-spacing:-0.330px">uT</i></div>
<div class="r" style="left:5px;top:118px;"><i style="left:0px;letter-spacing:-0.083px">Mag.</i><i style="left:30px;letter-spacing:-0.200px">Field</i><i style="left:60px;letter-spacing:-0.330px">Z</i><i style="left:70px;letter-spacing:-0.130px">(MTQ)</i><i style="left:113px;letter-spacing:-0.070px">-0,18</i><i style="left:149px;letter-spacing:-0.330px">uT</i></div>
<div class="r" style="left:5px;top:138px;"><i style="left:0px;letter-spacing:-0.001px">Magnetic</i><i style="left:55px;letter-spacing:-0.087px">Bias</i><i style="left:89px;letter-spacing:0.194px">119,2</i><i style="left:129px;letter-spacing:-0.330px">uT</i></div>
<div class="r" style="left:5px;top:158px;"><i style="left:0px;letter-spacing:-0.001px">Magnetic</i><i style="left:55px;letter-spacing:-0.087px">Bias</i><i style="left:89px;letter-spacing:0.043px">-115,77</i><i style="left:139px;letter-spacing:-0.330px">uT</i></div>
<div class="r" style="left:5px;top:178px;"><i style="left:0px;letter-spacing:-0.001px">Magnetic</i><i style="left:55px;letter-spacing:-0.087px">Bias</i><i style="left:89px;letter-spacing:0.043px">-113,05</i><i style="left:139px;letter-spacing:-0.330px">uT</i></div>
<div class="r" style="left:6px;top:198px;"><i style="left:0px;letter-spacing:0.109px">Set</i><i style="left:22px;letter-spacing:-0.278px">Dipole</i><i style="left:60px;letter-spacing:-0.220px">MTQ</i><i style="left:89px;letter-spacing:-0.004px">X</i><i style="left:106px;letter-spacing:0.194px">16,44</i><i style="left:146px;letter-spacing:0.065px">mA·m2</i></div>
<div class="r" style="left:6px;top:218px;"><i style="left:0px;letter-spacing:0.109px">Set</i><i style="left:22px;letter-spacing:-0.278px">Dipole</i><i style="left:60px;letter-spacing:-0.220px">MTQ</i><i style="left:89px;letter-spacing:-1.004px">Y</i><i style="left:105px;letter-spacing:-0.070px">-17,9</i><i style="left:141px;letter-spacing:0.065px">mA·m2</i></div>
<div class="r" style="left:6px;top:238px;"><i style="left:0px;letter-spacing:0.109px">Set</i><i style="left:22px;letter-spacing:-0.278px">Dipole</i><i style="left:60px;letter-spacing:-0.220px">MTQ</i><i style="left:89px;letter-spacing:-0.330px">Z</i><i style="left:105px;letter-spacing:0.194px">11,23</i><i style="left:145px;letter-spacing:0.065px">mA·m2</i></div>
<div class="r" style="left:5px;top:258px;"><i style="left:0px;letter-spacing:-0.220px">MTQ</i><i style="left:29px;letter-spacing:-0.004px">X</i><i style="left:40px;letter-spacing:-0.048px">Current</i><i style="left:92px;letter-spacing:0.161px">1,27</i><i style="left:125px;letter-spacing:-0.168px">mA</i></div>
<div class="r" style="left:5px;top:278px;"><i style="left:0px;letter-spacing:-0.220px">MTQ</i><i style="left:29px;letter-spacing:-1.004px">Y</i><i style="left:39px;letter-spacing:-0.048px">Current</i><i style="left:91px;letter-spacing:0.161px">1,27</i><i style="left:124px;letter-spacing:-0.168px">mA</i></div>
<div class="r" style="left:5px;top:298px;"><i style="left:0px;letter-spacing:-0.220px">MTQ</i><i style="left:29px;letter-spacing:-0.330px">Z</i><i style="left:39px;letter-spacing:-0.048px">Current</i><i style="left:91px;letter-spacing:0.161px">1,27</i><i style="left:124px;letter-spacing:-0.168px">mA</i></div>
<div class="r" style="left:6px;top:318px;"><i style="left:0px;letter-spacing:-0.221px">Sun</i><i style="left:25px;letter-spacing:0.108px">sensor</i><i style="left:68px;letter-spacing:-0.006px">X+</i><i style="left:86px;letter-spacing:-0.004px">Q1</i><i style="left:111px;letter-spacing:0.216px">121,41</i><i style="left:158px;letter-spacing:0.163px">mV</i></div>
<div class="r" style="left:6px;top:338px;"><i style="left:0px;letter-spacing:-0.221px">Sun</i><i style="left:25px;letter-spacing:0.108px">sensor</i><i style="left:68px;letter-spacing:-0.006px">X+</i><i style="left:86px;letter-spacing:-0.004px">Q2</i><i style="left:111px;letter-spacing:0.194px">76,81</i><i style="left:151px;letter-spacing:0.163px">mV</i></div>
</div>
</div>
<div class="sb" style="left:1325px;top:168px;width:15px;height:359px;">
<div class="a" style="left:0;top:0;width:1px;height:359px;background:#c9dbee;"></div>
<div class="sbtn" style="top:0;height:15px;"></div>
<div class="tri" style="left:3px;top:5px;border-bottom:4px solid #1a1a1a;"></div>
<div class="sbtn" style="top:343px;height:16px;border-top:1px solid #7a8a99;border-bottom:1px solid #7a8a99;"></div>
<div class="tri" style="left:3px;top:350px;border-top:4px solid #1a1a1a;"></div>
<div class="thumb" style="top:15px;height:88px;"><div class="grip" style="top:41px;"></div></div>
</div>
<div class="tb" style="left:7px;top:552px;width:883px;height:179px;"></div>
<div class="tt" style="left:11px;top:546px;width:54px;"><div class="a" style="left:2px;top:0"><i style="left:0px;letter-spacing:-0.002px">Terminal</i></div></div>
<div class="tb" style="left:896px;top:552px;width:456px;height:179px;"></div>
<div class="tt" style="left:900px;top:546px;width:104px;"><div class="a" style="left:2px;top:0"><i style="left:0px;letter-spacing:0.054px">Status</i><i style="left:40px;letter-spacing:0.245px">messages</i></div></div>
<div class="boxhl" style="left:876px;top:568px;width:1px;height:145px;"></div>
<div class="term" id="term" style="left:19px;top:567px;width:857px;height:150px;border:1px solid #7a8a99;">
<div class="tr" style="left:0px;top:2px;"><i style="left:0px;letter-spacing:0.184px">Rawframe:</i><i style="left:53px;letter-spacing:0.384px">A8</i><i style="left:69px;letter-spacing:0.438px">98</i><i style="left:84px;letter-spacing:0.384px">9A</i><i style="left:100px;letter-spacing:0.438px">40</i><i style="left:115px;letter-spacing:0.438px">40</i><i style="left:130px;letter-spacing:0.438px">40</i><i style="left:145px;letter-spacing:0.438px">00</i><i style="left:160px;letter-spacing:0.438px">88</i><i style="left:175px;letter-spacing:0.108px">8C</i><i style="left:191px;letter-spacing:0.108px">9C</i><i style="left:207px;letter-spacing:0.438px">66</i><i style="left:222px;letter-spacing:0.384px">B0</i><i style="left:238px;letter-spacing:0.384px">A8</i><i style="left:254px;letter-spacing:0.438px">00</i><i style="left:269px;letter-spacing:0.438px">03</i><i style="left:284px;letter-spacing:0.165px">F0</i><i style="left:299px;letter-spacing:0.438px">00</i><i style="left:314px;letter-spacing:0.384px">B2</i><i style="left:330px;letter-spacing:0.384px">6B</i><i style="left:346px;letter-spacing:0.438px">82</i><i style="left:361px;letter-spacing:0.438px">00</i><i style="left:376px;letter-spacing:0.165px">0F</i><i style="left:391px;letter-spacing:0.438px">00</i><i style="left:406px;letter-spacing:0.438px">01</i><i style="left:421px;letter-spacing:0.438px">34</i><i style="left:436px;letter-spacing:0.384px">A7</i><i style="left:452px;letter-spacing:0.438px">15</i><i style="left:467px;letter-spacing:0.438px">33</i><i style="left:482px;letter-spacing:0.384px">B6</i><i style="left:498px;letter-spacing:0.438px">05</i><i style="left:513px;letter-spacing:0.165px">F1</i><i style="left:528px;letter-spacing:0.384px">9B</i><i style="left:544px;letter-spacing:0.438px">11</i><i style="left:559px;letter-spacing:0.438px">50</i><i style="left:574px;letter-spacing:0.438px">30</i><i style="left:589px;letter-spacing:0.438px">13</i><i style="left:604px;letter-spacing:0.384px">A2</i><i style="left:620px;letter-spacing:0.384px">E3</i><i style="left:636px;letter-spacing:-0.222px">CD</i><i style="left:653px;letter-spacing:0.438px">00</i><i style="left:668px;letter-spacing:0.438px">00</i><i style="left:683px;letter-spacing:0.438px">78</i><i style="left:698px;letter-spacing:0.108px">5D</i><i style="left:714px;letter-spacing:0.384px">5B</i><i style="left:730px;letter-spacing:0.108px">5D</i><i style="left:746px;letter-spacing:0.384px">5E</i><i style="left:762px;letter-spacing:0.438px">01</i><i style="left:777px;letter-spacing:0.438px">18</i><i style="left:792px;letter-spacing:0.384px">3B</i><i style="left:808px;letter-spacing:0.384px">8B</i><i style="left:824px;letter-spacing:0.384px">A7</i><i style="left:840px;letter-spacing:-0.165px">CF</i></div>
<div class="tr" style="left:0px;top:16px;"><i style="left:0px;letter-spacing:0.184px">Rawframe:</i><i style="left:53px;letter-spacing:0.384px">A8</i><i style="left:69px;letter-spacing:0.438px">98</i><i style="left:84px;letter-spacing:0.384px">9A</i><i style="left:100px;letter-spacing:0.438px">40</i><i style="left:115px;letter-spacing:0.438px">40</i><i style="left:130px;letter-spacing:0.438px">40</i><i style="left:145px;letter-spacing:0.438px">00</i><i style="left:160px;letter-spacing:0.438px">88</i><i style="left:175px;letter-spacing:0.108px">8C</i><i style="left:191px;letter-spacing:0.108px">9C</i><i style="left:207px;letter-spacing:0.438px">66</i><i style="left:222px;letter-spacing:0.384px">B0</i><i style="left:238px;letter-spacing:0.384px">A8</i><i style="left:254px;letter-spacing:0.438px">00</i><i style="left:269px;letter-spacing:0.438px">03</i><i style="left:284px;letter-spacing:0.165px">F0</i><i style="left:299px;letter-spacing:0.438px">00</i><i style="left:314px;letter-spacing:0.384px">B2</i><i style="left:330px;letter-spacing:0.384px">6B</i><i style="left:346px;letter-spacing:0.384px">E6</i><i style="left:362px;letter-spacing:0.438px">00</i><i style="left:377px;letter-spacing:0.165px">0F</i><i style="left:392px;letter-spacing:0.438px">00</i><i style="left:407px;letter-spacing:0.438px">01</i><i style="left:422px;letter-spacing:0.438px">34</i><i style="left:437px;letter-spacing:0.384px">B0</i><i style="left:453px;letter-spacing:0.438px">18</i><i style="left:468px;letter-spacing:0.108px">D3</i><i style="left:484px;letter-spacing:0.108px">C4</i><i style="left:500px;letter-spacing:0.438px">00</i><i style="left:515px;letter-spacing:0.438px">30</i><i style="left:530px;letter-spacing:0.438px">02</i><i style="left:545px;letter-spacing:0.438px">00</i><i style="left:560px;letter-spacing:0.438px">00</i><i style="left:575px;letter-spacing:0.438px">29</i><i style="left:590px;letter-spacing:0.108px">0C</i><i style="left:606px;letter-spacing:0.384px">E2</i><i style="left:622px;letter-spacing:0.165px">F2</i><i style="left:637px;letter-spacing:-0.108px">FF</i><i style="left:652px;letter-spacing:0.384px">6B</i><i style="left:668px;letter-spacing:0.438px">27</i><i style="left:683px;letter-spacing:0.054px">AD</i><i style="left:700px;letter-spacing:0.108px">D5</i><i style="left:716px;letter-spacing:0.054px">BC</i><i style="left:733px;letter-spacing:0.330px">BA</i><i style="left:750px;letter-spacing:0.438px">14</i><i style="left:765px;letter-spacing:0.438px">02</i><i style="left:780px;letter-spacing:0.438px">38</i><i style="left:795px;letter-spacing:0.438px">99</i><i style="left:810px;letter-spacing:0.384px">1B</i><i style="left:826px;letter-spacing:0.438px">02</i><i style="left:841px;letter-spacing:0.384px">1B</i></div>
<div class="tr" style="left:0px;top:30px;"><i style="left:0px;letter-spacing:0.184px">Rawframe:</i><i style="left:53px;letter-spacing:0.384px">A8</i><i style="left:69px;letter-spacing:0.438px">98</i><i style="left:84px;letter-spacing:0.384px">9A</i><i style="left:100px;letter-spacing:0.438px">40</i><i style="left:115px;letter-spacing:0.438px">40</i><i style="left:130px;letter-spacing:0.438px">40</i><i style="left:145px;letter-spacing:0.438px">00</i><i style="left:160px;letter-spacing:0.438px">88</i><i style="left:175px;letter-spacing:0.108px">8C</i><i style="left:191px;letter-spacing:0.108px">9C</i><i style="left:207px;letter-spacing:0.438px">66</i><i style="left:222px;letter-spacing:0.384px">B0</i><i style="left:238px;letter-spacing:0.384px">A8</i><i style="left:254px;letter-spacing:0.438px">00</i><i style="left:269px;letter-spacing:0.438px">03</i><i style="left:284px;letter-spacing:0.165px">F0</i><i style="left:299px;letter-spacing:0.438px">00</i><i style="left:314px;letter-spacing:0.384px">B2</i><i style="left:330px;letter-spacing:0.108px">6C</i><i style="left:346px;letter-spacing:0.384px">9A</i><i style="left:362px;letter-spacing:0.438px">00</i><i style="left:377px;letter-spacing:0.165px">0F</i><i style="left:392px;letter-spacing:0.438px">00</i><i style="left:407px;letter-spacing:0.438px">01</i><i style="left:422px;letter-spacing:0.438px">34</i><i style="left:437px;letter-spacing:0.108px">C2</i><i style="left:453px;letter-spacing:0.438px">18</i><i style="left:468px;letter-spacing:0.165px">F3</i><i style="left:483px;letter-spacing:0.108px">C3</i><i style="left:499px;letter-spacing:0.438px">00</i><i style="left:514px;letter-spacing:0.438px">30</i><i style="left:529px;letter-spacing:0.438px">03</i><i style="left:544px;letter-spacing:0.438px">00</i><i style="left:559px;letter-spacing:0.438px">00</i><i style="left:574px;letter-spacing:0.438px">29</i><i style="left:589px;letter-spacing:0.108px">0C</i><i style="left:605px;letter-spacing:0.108px">D2</i><i style="left:621px;letter-spacing:0.165px">F2</i><i style="left:636px;letter-spacing:-0.108px">FF</i><i style="left:651px;letter-spacing:0.384px">6B</i><i style="left:667px;letter-spacing:0.438px">25</i><i style="left:682px;letter-spacing:0.108px">4D</i><i style="left:698px;letter-spacing:0.108px">D3</i><i style="left:714px;letter-spacing:0.054px">BC</i><i style="left:731px;letter-spacing:0.330px">AE</i><i style="left:748px;letter-spacing:0.108px">1C</i><i style="left:764px;letter-spacing:0.438px">02</i><i style="left:779px;letter-spacing:0.108px">1C</i><i style="left:795px;letter-spacing:0.438px">02</i><i style="left:810px;letter-spacing:0.438px">33</i><i style="left:825px;letter-spacing:0.438px">95</i><i style="left:840px;letter-spacing:0.438px">10</i></div>
<div class="tr" style="left:0px;top:44px;"><i style="left:0px;letter-spacing:0.184px">Rawframe:</i><i style="left:53px;letter-spacing:0.384px">A8</i><i style="left:69px;letter-spacing:0.438px">98</i><i style="left:84px;letter-spacing:0.384px">9A</i><i style="left:100px;letter-spacing:0.438px">40</i><i style="left:115px;letter-spacing:0.438px">40</i><i style="left:130px;letter-spacing:0.438px">40</i><i style="left:145px;letter-spacing:0.438px">00</i><i style="left:160px;letter-spacing:0.438px">88</i><i style="left:175px;letter-spacing:0.108px">8C</i><i style="left:191px;letter-spacing:0.108px">9C</i><i style="left:207px;letter-spacing:0.438px">66</i><i style="left:222px;letter-spacing:0.384px">B0</i><i style="left:238px;letter-spacing:0.384px">A8</i><i style="left:254px;letter-spacing:0.438px">00</i><i style="left:269px;letter-spacing:0.438px">03</i><i style="left:284px;letter-spacing:0.165px">F0</i><i style="left:299px;letter-spacing:0.438px">00</i><i style="left:314px;letter-spacing:0.384px">B2</i><i style="left:330px;letter-spacing:0.108px">6C</i><i style="left:346px;letter-spacing:0.108px">C2</i><i style="left:362px;letter-spacing:0.438px">00</i><i style="left:377px;letter-spacing:0.165px">0F</i><i style="left:392px;letter-spacing:0.438px">00</i><i style="left:407px;letter-spacing:0.438px">01</i><i style="left:422px;letter-spacing:0.438px">34</i><i style="left:437px;letter-spacing:0.108px">C6</i><i style="left:453px;letter-spacing:0.438px">18</i><i style="left:468px;letter-spacing:0.108px">C3</i><i style="left:484px;letter-spacing:0.108px">C2</i><i style="left:500px;letter-spacing:0.438px">00</i><i style="left:515px;letter-spacing:0.438px">30</i><i style="left:530px;letter-spacing:0.438px">02</i><i style="left:545px;letter-spacing:0.438px">00</i><i style="left:560px;letter-spacing:0.438px">00</i><i style="left:575px;letter-spacing:0.438px">29</i><i style="left:590px;letter-spacing:0.108px">0C</i><i style="left:606px;letter-spacing:0.384px">E2</i><i style="left:622px;letter-spacing:0.165px">F0</i><i style="left:637px;letter-spacing:-0.108px">FF</i><i style="left:652px;letter-spacing:0.384px">6B</i><i style="left:668px;letter-spacing:0.438px">28</i><i style="left:683px;letter-spacing:0.108px">0D</i><i style="left:699px;letter-spacing:0.108px">D5</i><i style="left:715px;letter-spacing:0.108px">C0</i><i style="left:731px;letter-spacing:0.054px">EC</i><i style="left:748px;letter-spacing:0.438px">22</i><i style="left:763px;letter-spacing:0.165px">9F</i><i style="left:778px;letter-spacing:0.165px">1F</i><i style="left:793px;letter-spacing:0.438px">02</i><i style="left:808px;letter-spacing:0.438px">30</i><i style="left:823px;letter-spacing:0.108px">7C</i><i style="left:839px;letter-spacing:0.438px">01</i><i style="left:854px;letter-spacing:0.384px">0A</i><i style="left:870px;letter-spacing:0.438px">11</i></div>
<div class="tr" style="left:0px;top:58px;"><i style="left:0px;letter-spacing:0.184px">Rawframe:</i><i style="left:53px;letter-spacing:0.384px">A8</i><i style="left:69px;letter-spacing:0.438px">98</i><i style="left:84px;letter-spacing:0.384px">9A</i><i style="left:100px;letter-spacing:0.438px">40</i><i style="left:115px;letter-spacing:0.438px">40</i><i style="left:130px;letter-spacing:0.438px">40</i><i style="left:145px;letter-spacing:0.438px">00</i><i style="left:160px;letter-spacing:0.438px">88</i><i style="left:175px;letter-spacing:0.108px">8C</i><i style="left:191px;letter-spacing:0.108px">9C</i><i style="left:207px;letter-spacing:0.438px">66</i><i style="left:222px;letter-spacing:0.384px">B0</i><i style="left:238px;letter-spacing:0.384px">A8</i><i style="left:254px;letter-spacing:0.438px">00</i><i style="left:269px;letter-spacing:0.438px">03</i><i style="left:284px;letter-spacing:0.165px">F0</i><i style="left:299px;letter-spacing:0.438px">00</i><i style="left:314px;letter-spacing:0.384px">B2</i><i style="left:330px;letter-spacing:0.108px">6D</i><i style="left:346px;letter-spacing:0.384px">4E</i><i style="left:362px;letter-spacing:0.438px">00</i><i style="left:377px;letter-spacing:0.165px">0F</i><i style="left:392px;letter-spacing:0.438px">00</i><i style="left:407px;letter-spacing:0.438px">01</i><i style="left:422px;letter-spacing:0.438px">34</i><i style="left:437px;letter-spacing:0.108px">D5</i><i style="left:453px;letter-spacing:0.438px">15</i><i style="left:468px;letter-spacing:0.438px">13</i><i style="left:483px;letter-spacing:0.384px">B7</i><i style="left:499px;letter-spacing:0.438px">06</i><i style="left:514px;letter-spacing:0.384px">B1</i><i style="left:530px;letter-spacing:0.438px">17</i><i style="left:545px;letter-spacing:0.438px">11</i><i style="left:560px;letter-spacing:0.438px">50</i><i style="left:575px;letter-spacing:0.438px">30</i><i style="left:590px;letter-spacing:0.438px">13</i><i style="left:605px;letter-spacing:0.384px">B2</i><i style="left:621px;letter-spacing:-0.165px">DF</i><i style="left:637px;letter-spacing:-0.222px">CC</i><i style="left:654px;letter-spacing:0.438px">00</i><i style="left:669px;letter-spacing:0.438px">00</i><i style="left:684px;letter-spacing:0.438px">78</i><i style="left:699px;letter-spacing:0.384px">5E</i><i style="left:715px;letter-spacing:0.108px">5C</i><i style="left:731px;letter-spacing:0.384px">5E</i><i style="left:747px;letter-spacing:0.165px">5F</i><i style="left:762px;letter-spacing:0.438px">01</i><i style="left:777px;letter-spacing:0.438px">17</i><i style="left:792px;letter-spacing:0.108px">7D</i><i style="left:808px;letter-spacing:0.438px">88</i><i style="left:823px;letter-spacing:0.438px">57</i><i style="left:838px;letter-spacing:0.384px">6A</i><i style="left:854px;letter-spacing:0.384px">0A</i><i style="left:870px;letter-spacing:0.438px">11</i></div>
</div>
<div class="a" style="left:20px;top:708px;width:855px;height:5px;background:#eeeeee;border-top:1px solid #c9dbee;"></div>
<div class="a" style="left:20px;top:708px;width:15px;height:5px;background:#eeeeee;border-top:1px solid #7a8a99;box-shadow:inset 1px 1px 0 #fff;"></div>
<div class="a" style="left:28px;top:712px;width:1px;height:1px;background:#222;"></div>
<div class="a" style="left:859px;top:708px;width:16px;height:5px;background:#eeeeee;border:1px solid #7a8a99;border-bottom:0;box-shadow:inset 1px 1px 0 #fff;"></div>
<div class="a" style="left:866px;top:712px;width:1px;height:1px;background:#222;"></div>
<div class="a" style="left:35px;top:708px;width:201px;height:5px;border:1px solid #6382bf;border-bottom:0;background:linear-gradient(#ffffff,#e3ecf7);"></div>
<div class="a" style="left:133px;top:712px;width:1px;height:1px;background:#6382bf;"></div>
<div class="a" style="left:135px;top:712px;width:1px;height:1px;background:#6382bf;"></div>
<div class="a" style="left:137px;top:712px;width:1px;height:1px;background:#6382bf;"></div>
<div class="a" style="left:907px;top:568px;line-height:14px;font-size:11px;white-space:pre;letter-spacing:0.3px;">Packets received:</div>
<div class="a" style="left:1011px;top:568px;line-height:14px;font-size:11px;white-space:pre;font-weight:normal;">5</div>
<div class="a" style="left:1022px;top:568px;line-height:14px;font-size:11px;white-space:pre;letter-spacing:0.3px;">Last packet received:</div>
<div class="a" style="left:1145px;top:568px;line-height:14px;font-size:11px;white-space:pre;font-weight:normal;">11:38:24</div>
<div class="a" style="left:1192px;top:568px;line-height:14px;font-size:11px;white-space:pre;letter-spacing:0.3px;">Sent to the server:</div>
<div class="a" style="left:1299px;top:568px;line-height:14px;font-size:11px;white-space:pre;font-weight:normal;">5</div>
<div class="boxhl" style="left:1345px;top:588px;width:1px;height:100px;"></div>
<div class="boxhl" style="left:903px;top:687px;width:443px;height:1px;"></div>
<div class="term" id="stat" style="left:902px;top:587px;width:443px;height:100px;border:1px solid #7a8a99;">
<div class="tr" style="left:0px;top:2px;"><i style="left:0px;letter-spacing:0.352px">[11:34:45]</i><i style="left:51px;letter-spacing:0.385px">Selected</i><i style="left:96px;letter-spacing:0.405px">audio-in:</i><i style="left:141px;letter-spacing:-0.002px">New</i><i style="left:164px;letter-spacing:0.427px">audio-in</i><i style="left:206px;letter-spacing:0.331px">slected</i></div>
<div class="tr" style="left:0px;top:16px;"><i style="left:0px;letter-spacing:0.352px">[11:37:38]</i><i style="left:51px;letter-spacing:0.083px">--&gt;TLM</i><i style="left:99px;letter-spacing:-0.044px">DFN3XT&lt;--</i></div>
<div class="tr" style="left:0px;top:30px;"><i style="left:0px;letter-spacing:0.352px">[11:37:47]</i><i style="left:51px;letter-spacing:0.083px">--&gt;TLM</i><i style="left:99px;letter-spacing:-0.044px">DFN3XT&lt;--</i></div>
<div class="tr" style="left:0px;top:44px;"><i style="left:0px;letter-spacing:0.352px">[11:38:05]</i><i style="left:51px;letter-spacing:0.083px">--&gt;TLM</i><i style="left:99px;letter-spacing:-0.044px">DFN3XT&lt;--</i></div>
<div class="tr" style="left:0px;top:58px;"><i style="left:0px;letter-spacing:0.352px">[11:38:09]</i><i style="left:51px;letter-spacing:0.083px">--&gt;TLM</i><i style="left:99px;letter-spacing:-0.044px">DFN3XT&lt;--</i></div>
<div class="tr" style="left:0px;top:72px;"><i style="left:0px;letter-spacing:0.352px">[11:38:24]</i><i style="left:51px;letter-spacing:0.083px">--&gt;TLM</i><i style="left:99px;letter-spacing:-0.044px">DFN3XT&lt;--</i></div>
</div>
<div class="a" style="left:0;top:713px;width:1361px;height:4px;background:#bad0e9;"></div>
<div class="a" style="left:1354px;top:25px;width:6px;height:692px;background:#bad0e9;"></div>
<div class="a" style="left:1360px;top:0;width:1px;height:717px;background:linear-gradient(#c4ecf8 0px,#7fd8f3 8px,#30c4ef 16px,#30c4ef 100%);"></div>
<div class="a" style="left:0;top:25px;width:4px;height:90px;background:linear-gradient(#c0d4eb 0%,#cfdff0 40%,#d9e6f4 100%);"></div>
<div class="a" style="left:1355px;top:25px;width:4px;height:90px;background:linear-gradient(#c0d4eb 0%,#cfdff0 40%,#dce8f5 100%);"></div>
<div class="a" style="left:4px;top:25px;width:1px;height:692px;background:#b6cde8;"></div>
<div class="a" style="left:1354px;top:25px;width:1px;height:692px;background:#b6cde8;"></div>
</body></html>
